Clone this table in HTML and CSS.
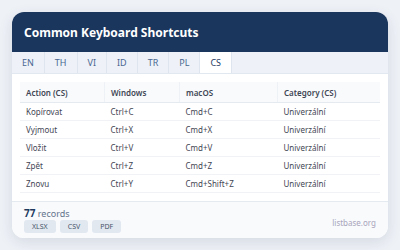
FILE: index.html
```html
<!DOCTYPE html>
<html lang="en">
<head>
    <meta charset="UTF-8">
    <title>Common Keyboard Shortcuts</title>
    <link rel="stylesheet" href="styles.css">
</head>
<body>
    <div class="card">
        <header class="card-head"><h1>Common Keyboard Shortcuts</h1></header>
        <nav class="tabs">
            <span class="tab">EN</span>
            <span class="tab">TH</span>
            <span class="tab">VI</span>
            <span class="tab">ID</span>
            <span class="tab">TR</span>
            <span class="tab">PL</span>
            <span class="tab active">CS</span>
        </nav>
        <div class="table-wrap">
            <table>
                <thead>
                    <tr><th class="c1">Action (CS)</th><th class="c2">Windows</th><th class="c3">macOS</th><th>Category (CS)</th></tr>
                </thead>
                <tbody>
                    <tr><td>Kopírovat</td><td>Ctrl+C</td><td>Cmd+C</td><td>Univerzální</td></tr>
                    <tr><td>Vyjmout</td><td>Ctrl+X</td><td>Cmd+X</td><td>Univerzální</td></tr>
                    <tr><td>Vložit</td><td>Ctrl+V</td><td>Cmd+V</td><td>Univerzální</td></tr>
                    <tr><td>Zpět</td><td>Ctrl+Z</td><td>Cmd+Z</td><td>Univerzální</td></tr>
                    <tr><td>Znovu</td><td>Ctrl+Y</td><td>Cmd+Shift+Z</td><td>Univerzální</td></tr>
                </tbody>
            </table>
        </div>
        <footer class="card-foot">
            <div class="foot-left">
                <div class="count"><b>77</b> records</div>
                <div class="exports">
                    <span class="btn">XLSX</span>
                    <span class="btn">CSV</span>
                    <span class="btn">PDF</span>
                </div>
            </div>
            <div class="brand">listbase.org</div>
        </footer>
    </div>
</body>
</html>
```

FILE: styles.css
```css
body {
    margin: 0;
    padding: 12px;
    background: #eef1f6;
    font-family: "Noto Sans", "Open Sans", sans-serif;
}
.card {
    width: 376px;
    height: 226px;
    background: #ffffff;
    border-radius: 12px;
    overflow: hidden;
    box-shadow: 0 4px 14px rgba(30, 50, 90, 0.12);
    display: flex;
    flex-direction: column;
}
.card-head {
    height: 40px;
    background: #1b365d;
    display: flex;
    align-items: center;
    padding: 0 12px;
}
.card-head h1 {
    margin: 0;
    color: #ffffff;
    font-size: 12px;
    font-weight: 700;
}
.tabs {
    display: flex;
    height: 21px;
    background: #eef2f8;
    border-bottom: 1px solid #e2e8f0;
}
.tab {
    display: flex;
    align-items: center;
    padding: 0 10px;
    font-size: 9px;
    color: #4a6791;
    border-right: 1px solid #dfe5ee;
}
.tab.active {
    background: #ffffff;
    color: #1e3a5f;
}
.table-wrap {
    padding: 8px 8px 0;
    flex: 1;
}
table {
    width: 100%;
    border-collapse: collapse;
    font-size: 8px;
    color: #3f4654;
}
th {
    height: 20px;
    text-align: left;
    font-weight: 600;
    background: #f8fafc;
    border-bottom: 1px solid #e5e9f0;
    padding: 0 6px;
}
th.c1, th.c2, th.c3 {
    border-right: 1px solid #eef1f5;
}
td {
    height: 17px;
    padding: 0 6px;
    border-bottom: 1px solid #f0f2f6;
}
th.c1 { width: 72px; }
th.c2 { width: 62px; }
th.c3 { width: 85px; }
.card-foot {
    height: 36px;
    border-top: 1px solid #e5e9f0;
    background: #f8fafc;
    display: flex;
    justify-content: space-between;
    align-items: center;
    padding: 0 12px;
}
.count {
    font-size: 9px;
    color: #64748b;
    line-height: 11px;
}
.count b {
    color: #1e3a5f;
    font-size: 10px;
}
.exports {
    display: flex;
    gap: 4px;
    margin-top: 1px;
}
.btn {
    background: #e2e8f0;
    color: #475569;
    font-size: 7px;
    border-radius: 3px;
    padding: 2px 8px;
    line-height: 9px;
}
.brand {
    font-size: 8px;
    color: #a9a4bb;
    margin-top: 4px;
}
```
